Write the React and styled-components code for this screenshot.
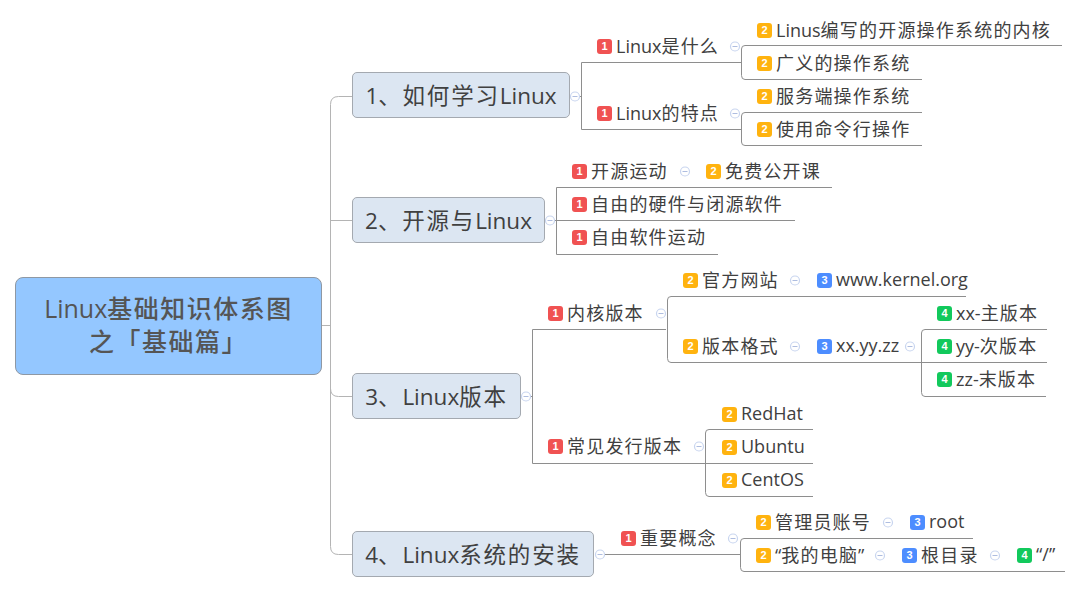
import React from 'react'
import styled, { createGlobalStyle } from 'styled-components'

const GlobalStyle = createGlobalStyle`
  html, body {
    margin: 0;
    background: #fff;
  }
`
const Canvas = styled.main`
  position: relative;
  width: 1080px;
  height: 592px;
  overflow: hidden;
  font-family: "Open Sans", "Noto Sans CJK SC", sans-serif;
  color: #404040;
`
const Lines = styled.svg`
  position: absolute;
  left: 0;
  top: 0;
`
const Root = styled.div`
  position: absolute;
  left: 15px;
  top: 277px;
  width: 307px;
  height: 98px;
  box-sizing: border-box;
  display: flex;
  align-items: center;
  justify-content: center;
  padding: 0 24px 3px;
  text-align: center;
  background: #94c7ff;
  border: 1px solid #8f98a3;
  border-radius: 8px;
  font-size: 25px;
  line-height: 33px;
  letter-spacing: 1.5px;
  font-weight: 500;
  color: #555;
`
const Topic = styled.div`
  position: absolute;
  left: 352px;
  top: ${p => p.$y}px;
  width: ${p => p.$w}px;
  height: 46px;
  box-sizing: border-box;
  display: flex;
  align-items: center;
  justify-content: center;
  padding-bottom: 2px;
  white-space: nowrap;
  background: #dce6f2;
  border: 1px solid #a4a9b0;
  border-radius: 5px;
  font-size: 22.5px;
  letter-spacing: 1.8px;
`
const Label = styled.div`
  position: absolute;
  left: ${p => p.$x}px;
  top: ${p => p.$y}px;
  height: 24px;
  margin-top: -13px;
  display: flex;
  align-items: center;
  gap: 4px;
  white-space: nowrap;
  font-size: 18px;
  letter-spacing: 1.2px;
`
const Marker = styled.span`
  width: 15px;
  height: 15px;
  flex: none;
  margin-top: 2px;
  display: flex;
  align-items: center;
  justify-content: center;
  border-radius: 3px;
  background: ${p => p.$color};
  color: #fff;
  font-family: "Liberation Sans", sans-serif;
  font-size: 11px;
  font-weight: 700;
  letter-spacing: 0;
`
const Latin = styled.span`
  letter-spacing: 0;
`

const markerColors = { 1: '#f05252', 2: '#ffb30f', 3: '#4d8dff', 4: '#12c95c' }

const topics = [
  { y: 72, w: 218, text: '1、如何学习Linux' },
  { y: 197, w: 193, text: '2、开源与Linux' },
  { y: 373, w: 169, text: '3、Linux版本' },
  { y: 531, w: 242, text: '4、Linux系统的安装' },
]

const labels = [
  { x: 597, y: 46, level: 1, text: 'Linux是什么' },
  { x: 597, y: 113, level: 1, text: 'Linux的特点' },
  { x: 757, y: 30, level: 2, text: 'Linus编写的开源操作系统的内核' },
  { x: 757, y: 63, level: 2, text: '广义的操作系统' },
  { x: 757, y: 96, level: 2, text: '服务端操作系统' },
  { x: 757, y: 129, level: 2, text: '使用命令行操作' },

  { x: 572, y: 171, level: 1, text: '开源运动' },
  { x: 706, y: 171, level: 2, text: '免费公开课' },
  { x: 572, y: 204, level: 1, text: '自由的硬件与闭源软件' },
  { x: 572, y: 237, level: 1, text: '自由软件运动' },

  { x: 548, y: 313, level: 1, text: '内核版本' },
  { x: 683, y: 280, level: 2, text: '官方网站' },
  { x: 817, y: 280, level: 3, text: 'www.kernel.org' },
  { x: 683, y: 346, level: 2, text: '版本格式' },
  { x: 817, y: 346, level: 3, text: 'xx.yy.zz' },
  { x: 937, y: 313, level: 4, text: 'xx-主版本' },
  { x: 937, y: 346, level: 4, text: 'yy-次版本' },
  { x: 937, y: 379, level: 4, text: 'zz-末版本' },
  { x: 548, y: 446, level: 1, text: '常见发行版本' },
  { x: 722, y: 414, level: 2, text: 'RedHat' },
  { x: 722, y: 447, level: 2, text: 'Ubuntu' },
  { x: 722, y: 480, level: 2, text: 'CentOS' },

  { x: 621, y: 538, level: 1, text: '重要概念' },
  { x: 756, y: 522, level: 2, text: '管理员账号' },
  { x: 910, y: 522, level: 3, text: 'root' },
  { x: 756, y: 555, level: 2, text: '“我的电脑”' },
  { x: 902, y: 555, level: 3, text: '根目录' },
  { x: 1017, y: 555, level: 4, text: '“/”' },
]

// trunk from the root to the four topics
const trunk = [
  'M322 325.5H330.5',
  'M352 96.5H338.5Q330.5 96.5 330.5 104.5V546.5Q330.5 554.5 338.5 554.5H352',
  'M330.5 220.5H352',
  'M330.5 388.5Q330.5 396.5 338.5 396.5H352',
]

const branches = [
  'M575 96.5H581.5',
  'M741 62.5H581.5V129.5H741',
  'M1062 45.5H745Q741.5 45.5 741.5 49V75.5Q741.5 79.5 745 79.5H922',
  'M922 112.5H745Q741.5 112.5 741.5 116V142Q741.5 145.5 745 145.5H922',

  'M550 220.5H556.5',
  'M832 187.5H556.5V254.5H718',
  'M556.5 220.5H795',

  'M526 396.5H532.5',
  'M666 329.5H532.5V463.5H705',
  'M966 296.5H671Q667.5 296.5 667.5 300V358.5Q667.5 362.5 671 362.5H921',
  'M1047 329.5H925Q921.5 329.5 921.5 333V392.5Q921.5 396.5 925 396.5H1046',
  'M921.5 362.5H1047',
  'M813 429.5H709Q705.5 429.5 705.5 433V492.5Q705.5 496.5 709 496.5H813',
  'M705.5 463.5H813',

  'M600 554.5H740',
  'M973 538.5H744Q740.5 538.5 740.5 542V567.5Q740.5 571.5 744 571.5H1065',
]

const collapses = [
  [575, 96], [735, 46], [735, 113],
  [550, 220], [685, 171],
  [526, 396], [661, 313], [795, 280], [795, 346], [910, 346], [699, 446],
  [600, 554], [733, 538], [888, 522], [880, 555], [995, 555],
]

const Collapse = ({ x, y }) => (
  <g>
    <circle cx={x} cy={y + 0.5} r="4.5" fill="#fff" stroke="#c8d5ef" strokeWidth="1.2" />
    <path d={`M${x - 2.5} ${y + 0.5}H${x + 2.5}`} stroke="#aebde0" strokeWidth="1" />
  </g>
)

// latin runs sit tighter than the chinese ones in the map
const Spaced = ({ text }) =>
  text.split(/([\x00-\x7F“”]+)/).map((part, i) =>
    i % 2 ? <Latin key={i}>{part}</Latin> : part
  )

const App = () => {
  return (
    <Canvas>
      <GlobalStyle />
      <Lines width="1080" height="592" fill="none">
        {trunk.map(d => <path key={d} d={d} stroke="#b4b4b4" />)}
        {branches.map(d => <path key={d} d={d} stroke="#8e8e8e" />)}
        {collapses.map(([x, y]) => <Collapse key={`${x}-${y}`} x={x} y={y} />)}
      </Lines>
      <Root><div><Spaced text="Linux基础知识体系图 之「基础篇」" /></div></Root>
      {topics.map(t => (
        <Topic key={t.text} $y={t.y} $w={t.w}><span><Spaced text={t.text} /></span></Topic>
      ))}
      {labels.map(l => (
        <Label key={l.text} $x={l.x} $y={l.y}>
          <Marker $color={markerColors[l.level]}>{l.level}</Marker>
          <span><Spaced text={l.text} /></span>
        </Label>
      ))}
    </Canvas>
  )
}

export default App
